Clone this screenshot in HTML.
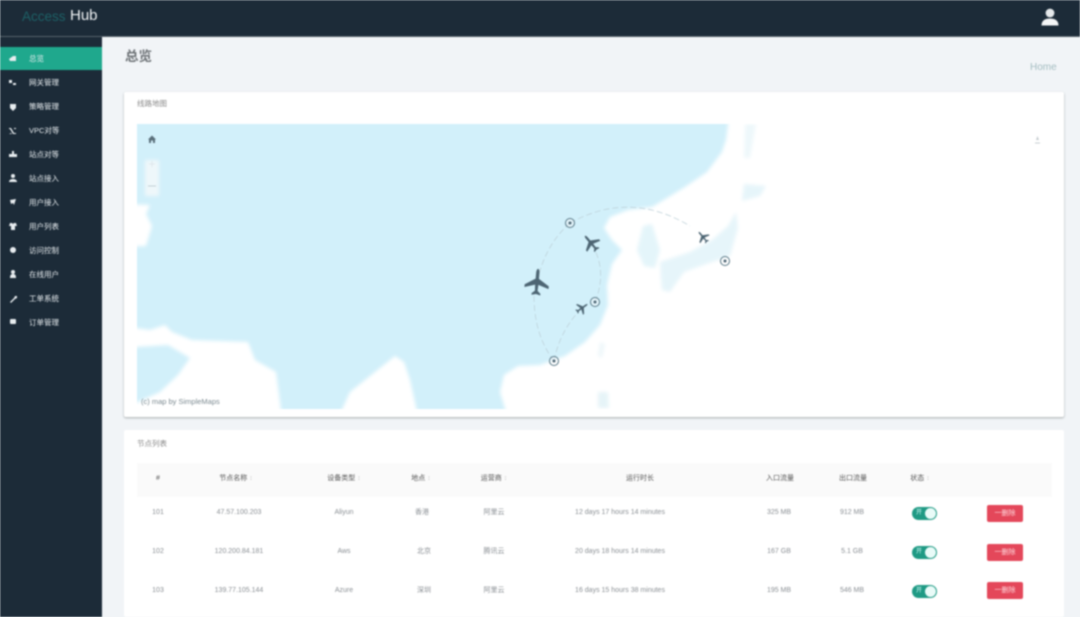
<!DOCTYPE html>
<html lang="zh-CN"><head><meta charset="utf-8"><title>Access Hub</title>
<style>
*{box-sizing:border-box;margin:0;padding:0}
html,body{width:1080px;height:617px;overflow:hidden;background:#f1f4f7}
body{font-family:"Liberation Sans","Noto Sans CJK SC",sans-serif;position:relative}
#w{position:absolute;inset:0;filter:blur(.7px);overflow:hidden;background:#f1f4f7}
.a{position:absolute;white-space:nowrap}
#top{left:0;top:0;width:1080px;height:37px;background:#1c2b38;border-bottom:1px solid #56636c}
#side{left:0;top:37px;width:102px;height:580px;background:#1c2b38}
#act{left:0;top:47px;width:102px;height:23px;background:#1fa88d}
.m{left:29px;font-size:7.5px;line-height:10px;color:#e8edf0}
.card{left:124px;width:940px;background:#fff;border-radius:2px}
.t{font-size:7.5px;line-height:10px;color:#777}
.h{font-size:7px;line-height:10px;color:#555;transform:translateX(-50%)}
.c{font-size:7px;line-height:10px;color:#8a8f94;transform:translateX(-50%)}
.sw{left:912px;width:25px;height:13px;border-radius:7px;background:#1f9a84;color:#dff;font-size:6px;line-height:13px;padding-left:4px}
.sw:after{content:"";position:absolute;right:1px;top:1px;width:11px;height:11px;border-radius:50%;background:#e9fbf8}
.del{left:987px;width:36px;height:17px;border-radius:2px;background:#e4475a;color:#ffd9dd;font-size:7px;line-height:17px;text-align:center}
</style></head><body><div id="w">
<div class="a" id="top"></div>
<div class="a" style="left:22px;top:8px;font-size:13.5px;line-height:17px;color:#1d6066">Access</div>
<div class="a" style="left:70px;top:7px;font-size:15px;line-height:18px;color:#f2f5f7">Hub</div>
<svg class="a" style="left:1039px;top:8px" width="22" height="20" viewBox="0 0 22 20"><circle cx="11" cy="5" r="4.4" fill="#e4e8ea"/><path d="M2.500 17.500C2.500 12.500 6 10.500 11 10.500S19.500 12.500 19.500 17.500Z" fill="#f4f6f7"/></svg>

<div class="a" id="side"></div>
<div class="a" id="act"></div>
<svg class="a" style="left:0;top:47px" width="30" height="290" viewBox="0 0 30 290" fill="#e8edf0">
<path d="M9 12l4-3h3v5h-6z"/>
<path d="M9 33h3v3h4v2h-3v-2h-4z"/>
<path d="M10 57h6v4l-3 3-3-3z"/>
<path d="M9 81h2l3 5h2v1h-3l-3-5h-1zM9 87l2-1 1 1h-3zM14 81h2v1h-2z"/>
<path d="M12 104h2v3h3v3H9v-3h3z"/>
<circle cx="13" cy="129" r="2"/><path d="M9 135c0-2 2-3 4-3s4 1 4 3z"/>
<path d="M10 153l6-1-2 6-1-2-2 1z"/>
<path d="M10 176h2l1 1 1-1h2l1 3h-2v4h-4v-4H9z"/>
<circle cx="13" cy="203" r="3"/>
<circle cx="13" cy="225" r="2"/><path d="M10 231c0-3 1-4 3-4s3 1 3 4z"/>
<path d="M10 255l4-4 1-2h2v2l-2 1-4 4z"/>
<rect x="10" y="272" width="6" height="5" rx="1"/>
</svg>
<div class="a m" style="top:54px">总览</div>
<div class="a m" style="top:78px">网关管理</div>
<div class="a m" style="top:102px">策略管理</div>
<div class="a m" style="top:126px">VPC对等</div>
<div class="a m" style="top:150px">站点对等</div>
<div class="a m" style="top:174px">站点接入</div>
<div class="a m" style="top:198px">用户接入</div>
<div class="a m" style="top:222px">用户列表</div>
<div class="a m" style="top:246px">访问控制</div>
<div class="a m" style="top:270px">在线用户</div>
<div class="a m" style="top:294px">工单系统</div>
<div class="a m" style="top:318px">订单管理</div>

<div class="a" style="left:125px;top:48px;font-size:13.5px;line-height:18px;font-weight:bold;color:#6d7276">总览</div>
<div class="a" style="left:1030px;top:62px;font-size:10px;line-height:12px;color:#a3bcc0">Home</div>

<div class="a card" style="top:92px;height:325px;box-shadow:0 1px 2px #a9adae"></div>
<div class="a t" style="left:137px;top:99px;color:#8a8a8a">线路地图</div>
<svg class="a" style="left:137px;top:124px" width="915" height="285" viewBox="137 124 915 285">
<defs><filter id="b" x="-5%" y="-5%" width="110%" height="110%"><feGaussianBlur stdDeviation="1.800"/></filter><clipPath id="cp"><rect x="137" y="124" width="915" height="285"/></clipPath></defs>
<g clip-path="url(#cp)"><g filter="url(#b)">
<path fill="#d2f0fa" d="M120 110H730L726 140 722 152 707 172 685 187 667 198 652 207 628 210 610 217 604 228 612 240 622 250 612 264 607 285 608 305 600 325 585 342 565 356 540 365 518 366 504 375 500 392 510 425H420L410 380 404 362 395 356 380 368 350 392 335 425H283L276 372 255 360 248 342 192 340 172 332 165 325 150 330 120 326V247L146 246 152 226 146 214 150 205 120 204Z"/>
<path fill="#d2f0fa" d="M120 348L168 345 190 358 178 375 160 392 120 410Z"/>
<path fill="#e4f5fa" d="M643 226L652 224 660 250 655 268 644 266 637 250Z"/>
<path fill="#e6f5fa" d="M660 262L690 252 712 240 728 226 736 212 738 228 730 256 712 262 684 272 670 292 662 290 661 280Z"/>
<path fill="#e6f5fa" d="M744 184L766 186 760 196 742 201Z"/>
<path fill="#eef8fb" d="M745 124H756L750 158H744Z"/>
<path fill="#e6f4f8" d="M598 392H608L609 408H598Z"/>
<path fill="#eef7fa" d="M600 342L605 344 602 358 598 356Z"/>
<path fill="#eef7fa" d="M145 160h14v36h-14z"/>
</g></g>
<g fill="none" stroke="#bccfd7" stroke-width=".7" stroke-dasharray="6 3">
<path d="M570 223Q630 190 690 226"/>
<path d="M570 223Q545 245 537 282"/>
<path d="M534 296Q534 335 554 361"/>
<path d="M554 361Q560 330 582 308"/>
<path d="M595 302Q608 270 591 243"/>
</g>
<g fill="#fff" fill-opacity=".4" stroke="#587785" stroke-width="1">
<circle cx="570" cy="223" r="4.500"/><circle cx="595" cy="302" r="4.500"/><circle cx="554" cy="361" r="4.500"/><circle cx="725" cy="261" r="4.500"/>
</g>
<g fill="#4d6573">
<circle cx="570" cy="223" r="1.500"/><circle cx="595" cy="302" r="1.500"/><circle cx="554" cy="361" r="1.500"/><circle cx="725" cy="261" r="1.500"/>
<path transform="translate(537 282) rotate(5) scale(1.100)" d="M0-12C1-12 1.500-10 1.500-8V-3L11 3V5.500L1.500 2.500 1.200 8 4 10.500V12L0 11-4 12V10.500L-1.200 8-1.500 2.500-11 5.500V3L-1.500-3V-8C-1.500-10-1-12 0-12Z"/>
<path transform="translate(591 243) rotate(-40) scale(.78)" d="M0-12C1-12 1.500-10 1.500-8V-3L11 3V5.500L1.500 2.500 1.200 8 4 10.500V12L0 11-4 12V10.500L-1.200 8-1.500 2.500-11 5.500V3L-1.500-3V-8C-1.500-10-1-12 0-12Z"/>
<path transform="translate(582 308) rotate(55) scale(.55)" d="M0-12C1-12 1.500-10 1.500-8V-3L11 3V5.500L1.500 2.500 1.200 8 4 10.500V12L0 11-4 12V10.500L-1.200 8-1.500 2.500-11 5.500V3L-1.500-3V-8C-1.500-10-1-12 0-12Z"/>
<path transform="translate(703 237) rotate(-40) scale(.55)" d="M0-12C1-12 1.500-10 1.500-8V-3L11 3V5.500L1.500 2.500 1.200 8 4 10.500V12L0 11-4 12V10.500L-1.200 8-1.500 2.500-11 5.500V3L-1.500-3V-8C-1.500-10-1-12 0-12Z"/>
</g>
<path fill="#5a6f7a" d="M152 135.500L156 139.500H155V143H153V140.500H151V143H149V139.500H148Z"/>
<path d="M149 164h6M152 161v6" stroke="#dbe5e9" stroke-width=".8"/>
<path d="M148 186h8" stroke="#b7c6cc" stroke-width=".8"/>
<path d="M1035 143h5" stroke="#b9c2c6" stroke-width=".8"/><path d="M1037.500 136l1.500 4h-3z" fill="#c5ccd0"/>
<text x="141" y="404" font-size="7.500" fill="#7c8a91" font-family="Liberation Sans, sans-serif">(c) map by SimpleMaps</text>
</svg>

<div class="a card" style="top:430px;height:187px"></div>
<div class="a t" style="left:137px;top:439px;color:#8a8a8a">节点列表</div>
<div class="a" style="left:137px;top:463px;width:915px;height:34px;background:#fafafa"></div>
<div class="a h" style="left:158px;top:474px">#</div>
<div class="a h" style="left:236px;top:474px">节点名称 <span style="color:#ccc">↕</span></div>
<div class="a h" style="left:344px;top:474px">设备类型 <span style="color:#ccc">↕</span></div>
<div class="a h" style="left:421px;top:474px">地点 <span style="color:#ccc">↕</span></div>
<div class="a h" style="left:494px;top:474px">运营商 <span style="color:#ccc">↕</span></div>
<div class="a h" style="left:640px;top:474px">运行时长</div>
<div class="a h" style="left:780px;top:474px">入口流量</div>
<div class="a h" style="left:853px;top:474px">出口流量</div>
<div class="a h" style="left:920px;top:474px">状态 <span style="color:#ccc">↕</span></div>

<div class="a c" style="left:158px;top:508px">101</div>
<div class="a c" style="left:239px;top:508px">47.57.100.203</div>
<div class="a c" style="left:344px;top:508px">Aliyun</div>
<div class="a c" style="left:422px;top:508px">香港</div>
<div class="a c" style="left:494px;top:508px">阿里云</div>
<div class="a c" style="left:620px;top:508px">12 days 17 hours 14 minutes</div>
<div class="a c" style="left:779px;top:508px">325 MB</div>
<div class="a c" style="left:852px;top:508px">912 MB</div>
<div class="a sw" style="top:507px">开</div>
<div class="a del" style="top:505px">一删除</div>

<div class="a c" style="left:158px;top:547px">102</div>
<div class="a c" style="left:239px;top:547px">120.200.84.181</div>
<div class="a c" style="left:344px;top:547px">Aws</div>
<div class="a c" style="left:424px;top:547px">北京</div>
<div class="a c" style="left:494px;top:547px">腾讯云</div>
<div class="a c" style="left:620px;top:547px">20 days 18 hours 14 minutes</div>
<div class="a c" style="left:779px;top:547px">167 GB</div>
<div class="a c" style="left:852px;top:547px">5.1 GB</div>
<div class="a sw" style="top:546px">开</div>
<div class="a del" style="top:544px">一删除</div>

<div class="a c" style="left:158px;top:586px">103</div>
<div class="a c" style="left:239px;top:586px">139.77.105.144</div>
<div class="a c" style="left:344px;top:586px">Azure</div>
<div class="a c" style="left:424px;top:586px">深圳</div>
<div class="a c" style="left:494px;top:586px">阿里云</div>
<div class="a c" style="left:620px;top:586px">16 days 15 hours 38 minutes</div>
<div class="a c" style="left:779px;top:586px">195 MB</div>
<div class="a c" style="left:852px;top:586px">546 MB</div>
<div class="a sw" style="top:585px">开</div>
<div class="a del" style="top:582px">一删除</div>
</div></body></html>
